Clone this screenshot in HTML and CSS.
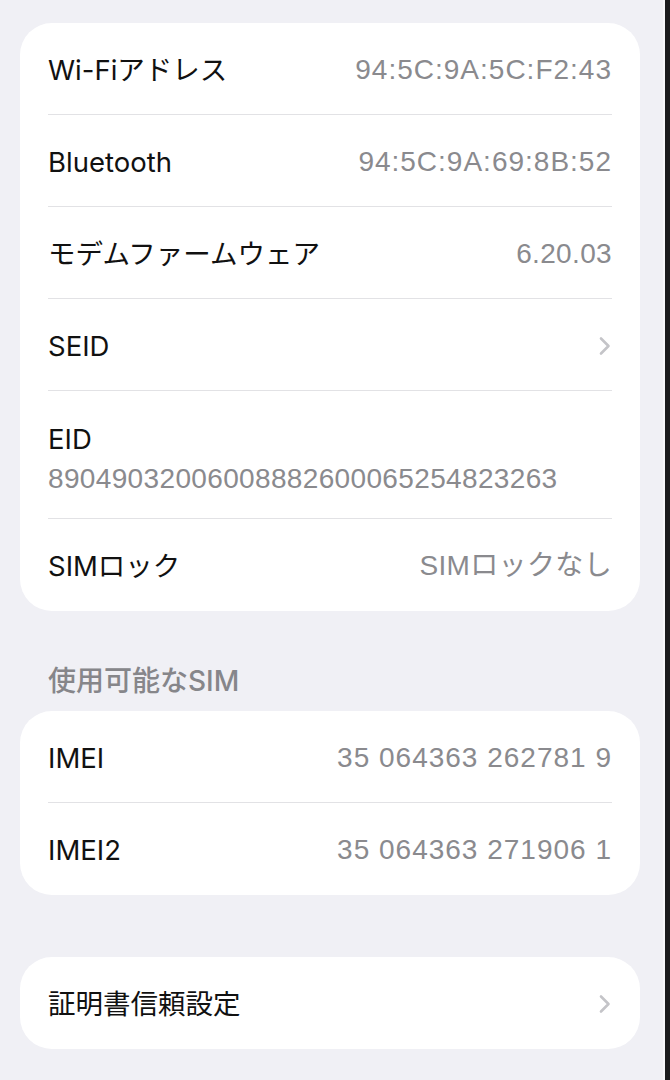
FILE: index.html
```html
<!DOCTYPE html>
<html lang="ja">
<head>
    <meta charset="UTF-8">
    <meta name="viewport" content="width=device-width, initial-scale=1.0">
    <title>情報</title>
    <link rel="stylesheet" href="styles.css">
</head>
<body>
    <div class="screen">
        <section class="group">
            <div class="row">
                <span class="label">Wi-Fiアドレス</span>
                <span class="value value-wide">94:5C:9A:5C:F2:43</span>
            </div>
            <div class="row">
                <span class="label">Bluetooth</span>
                <span class="value value-wide">94:5C:9A:69:8B:52</span>
            </div>
            <div class="row">
                <span class="label">モデムファームウェア</span>
                <span class="value">6.20.03</span>
            </div>
            <div class="row">
                <span class="label">SEID</span>
                <svg class="chevron" width="14" height="20" viewBox="0 0 14 20">
                    <path d="M3 2.5 L10.5 10 L3 17.5" />
                </svg>
            </div>
            <div class="row row-stacked">
                <span class="label">EID</span>
                <span class="value">89049032006008882600065254823263</span>
            </div>
            <div class="row">
                <span class="label">SIMロック</span>
                <span class="value">SIMロックなし</span>
            </div>
        </section>

        <h2 class="group-title">使用可能なSIM</h2>
        <section class="group">
            <div class="row">
                <span class="label">IMEI</span>
                <span class="value value-wide">35 064363 262781 9</span>
            </div>
            <div class="row">
                <span class="label">IMEI2</span>
                <span class="value value-wide">35 064363 271906 1</span>
            </div>
        </section>

        <section class="group group-single">
            <div class="row">
                <span class="label">証明書信頼設定</span>
                <svg class="chevron" width="14" height="20" viewBox="0 0 14 20">
                    <path d="M3 2.5 L10.5 10 L3 17.5" />
                </svg>
            </div>
        </section>
    </div>
</body>
</html>
```

FILE: styles.css
```css
html, body {
    margin: 0;
    padding: 0;
}

body {
    background: #1c1c1e;
    font-family: Inter, "Noto Sans CJK JP", sans-serif;
    -webkit-font-smoothing: antialiased;
}

.screen {
    width: 665px;
    min-height: 1080px;
    box-sizing: border-box;
    padding: 23px 0 0 20px;
    background: #f0f0f5;
    border-right: 2px solid #f8f8fb;
}

.group {
    width: 620px;
    background: #fff;
    border-radius: 32px;
}

.row {
    display: flex;
    justify-content: space-between;
    align-items: center;
    box-sizing: border-box;
    height: 92px;
    margin: 0 28px;
    padding-top: 2px;
    border-bottom: 1px solid #e2e2e5;
}

.row:last-child {
    border-bottom: none;
}

.row-stacked {
    flex-direction: column;
    align-items: flex-start;
    justify-content: flex-start;
    gap: 6px;
    height: 128px;
    padding-top: 31px;
}

.label {
    font-size: 27.5px;
    line-height: 34px;
    color: #111;
}

.value {
    font-family: "Liberation Sans", "Noto Sans CJK JP", sans-serif;
    font-size: 28px;
    line-height: 34px;
    letter-spacing: 0.35px;
    color: #8a8a8e;
}

.value-wide {
    letter-spacing: 1px;
}

.chevron path {
    fill: none;
    stroke: #c4c4c8;
    stroke-width: 2.6;
    stroke-linecap: round;
    stroke-linejoin: round;
}

.group-title {
    margin: 53px 0 13px 28px;
    font-size: 28px;
    line-height: 34px;
    font-weight: 500;
    color: #86868a;
}

.group-single {
    margin-top: 62px;
}
```
